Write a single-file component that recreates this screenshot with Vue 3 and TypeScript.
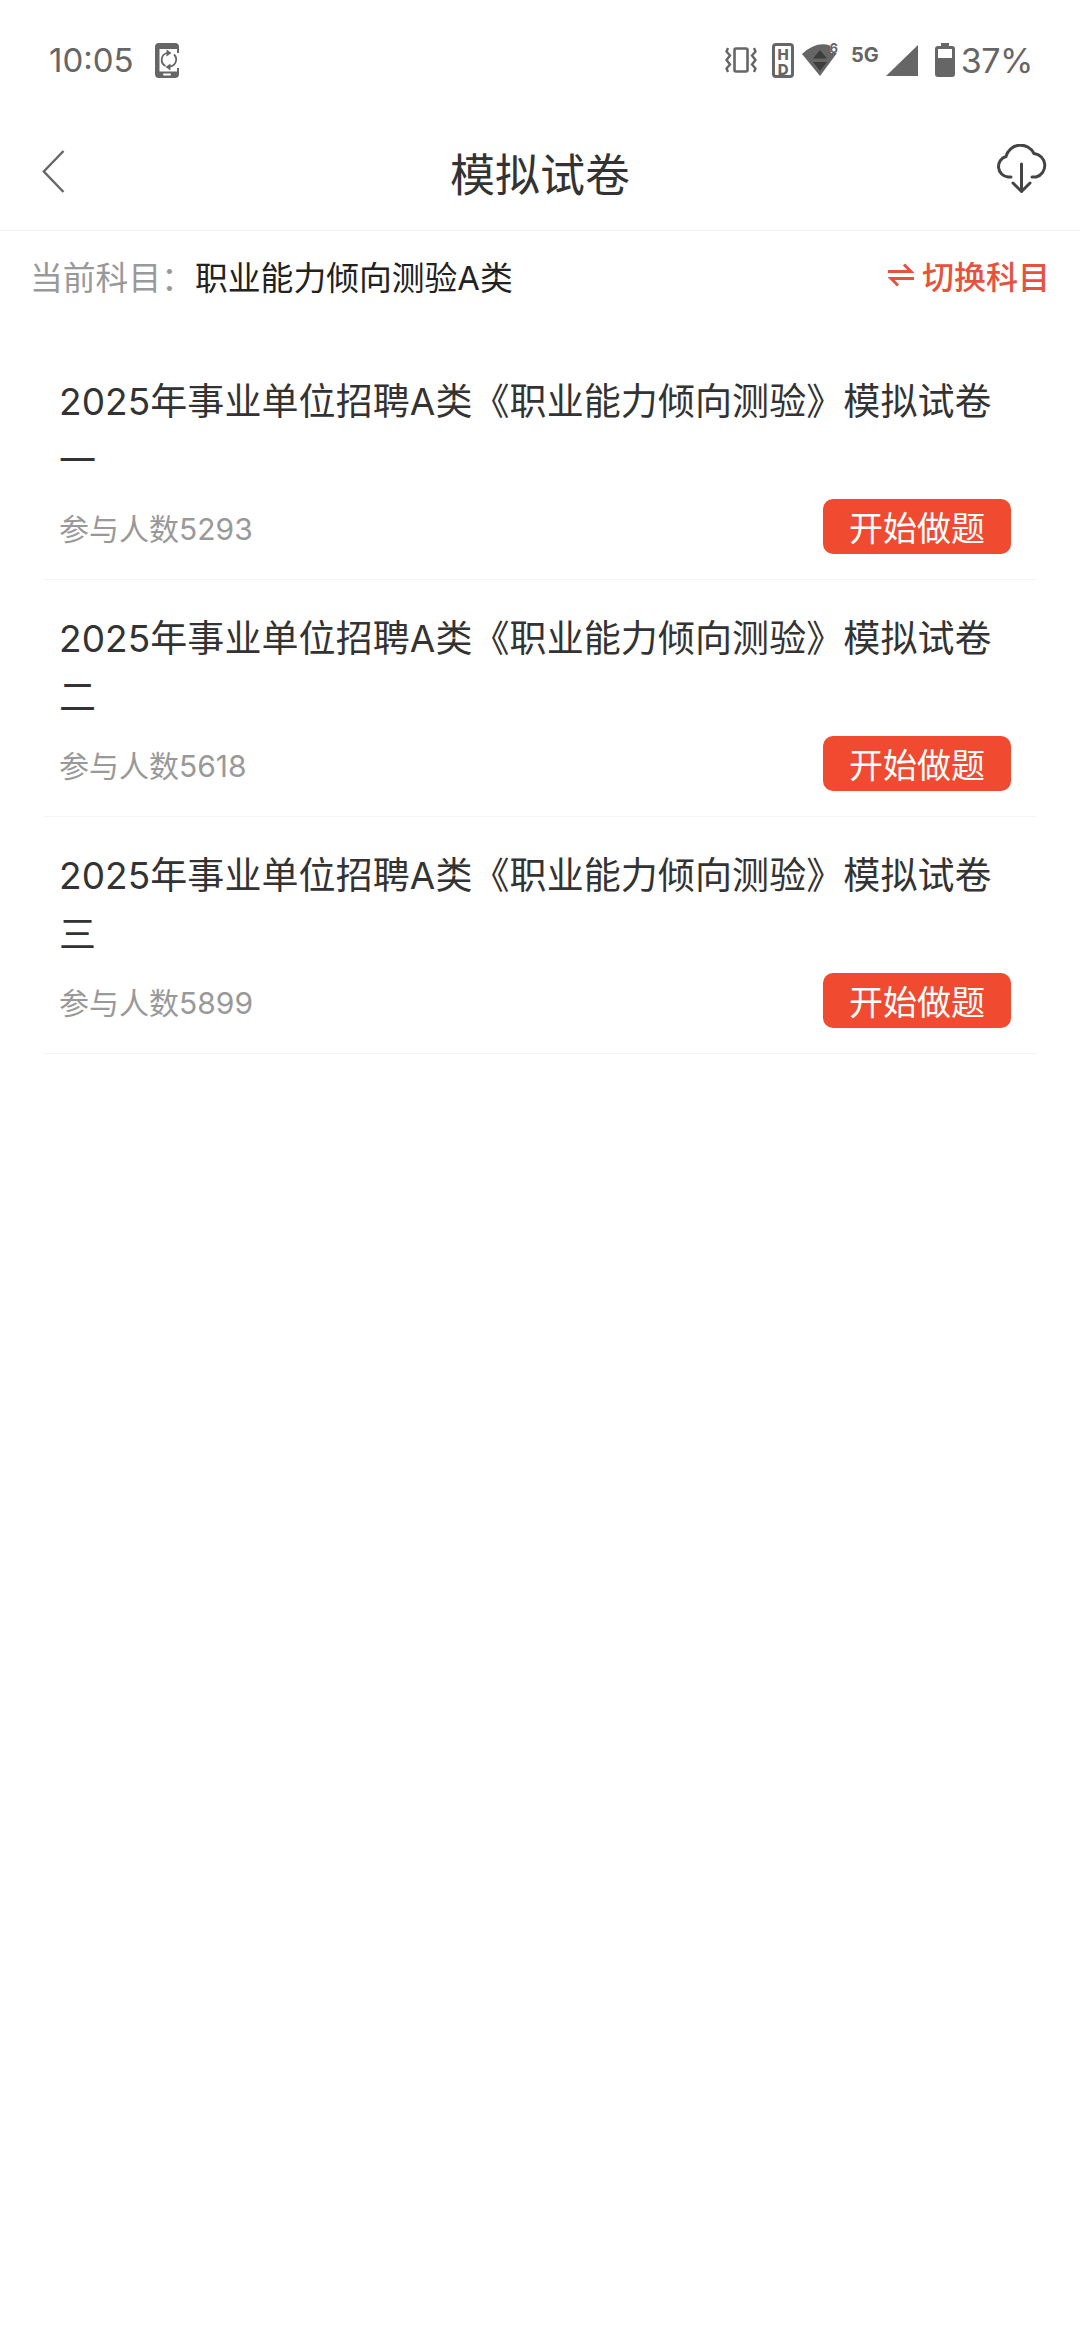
<script setup lang="ts">
interface Paper {
  suffix: string;
  count: number;
}

const papers: Paper[] = [
  { suffix: '一', count: 5293 },
  { suffix: '二', count: 5618 },
  { suffix: '三', count: 5899 },
];

const baseTitle = '2025年事业单位招聘A类《职业能力倾向测验》模拟试卷';
</script>

<template>
  <div class="page">
    <div class="status-bar">
      <div class="status-left">
        <span class="clock">10:05</span>
        <svg class="phone-sync" width="24" height="35" viewBox="0 0 24 35">
          <path fill="#666" d="M4 0h16a4 4 0 0 1 4 4v2H4.500v22.500H24V31a4 4 0 0 1-4 4H4a4 4 0 0 1-4-4V4a4 4 0 0 1 4-4z" />
          <path fill="#666" d="M22 6h2v4h-2zM22 25h2v4h-2z" />
          <rect x="8" y="30.500" width="8" height="2" rx="1" fill="#fff" />
          <path fill="none" stroke="#666" stroke-width="1.800" d="M10.500 23a7 7 0 0 1 1.500-13M19 11.500a7 7 0 0 1-4 12" />
          <path fill="#666" d="M11.500 6.500l5 3.500-5 3.500zM15.500 20.500l-5 3.500 5 3.500z" />
        </svg>
      </div>
      <div class="status-right">
        <svg class="vibrate" width="32" height="26" viewBox="0 0 32 26">
          <rect x="9.500" y="1.500" width="13" height="23" rx="1.500" fill="none" stroke="#666" stroke-width="2.600" />
          <path fill="none" stroke="#666" stroke-width="2.400" d="M3 1L1.500 4.500 5 8.500 1.500 13 5 17.500 1.500 21.500 3 25M29 1L30.500 4.500 27 8.500 30.500 13 27 17.500 30.500 21.500 29 25" />
        </svg>
        <div class="hd-badge">
          <span class="hd-text">HD</span>
        </div>
        <div class="wifi">
          <svg width="36" height="32" viewBox="0 0 36 32">
            <path fill="#666" d="M0 10Q14-3 28 1.500L29 9H35L18 32z" />
            <path fill="#3d3d3d" d="M18 6l7 8.500H11zM18 27l-7-9h14z" />
          </svg>
          <span class="wifi-six">6</span>
        </div>
        <span class="five-g">5G</span>
        <svg class="signal" width="32" height="31" viewBox="0 0 32 31">
          <path fill="#666" d="M32 0v31H0z" />
        </svg>
        <svg class="battery" width="20" height="34" viewBox="0 0 20 34">
          <path fill="#666" d="M6 0h8v3h3a3 3 0 0 1 3 3v25a3 3 0 0 1-3 3H3a3 3 0 0 1-3-3V6a3 3 0 0 1 3-3h3z" />
          <rect x="3" y="6" width="14" height="9" fill="#fff" />
        </svg>
        <span class="percent">37%</span>
      </div>
    </div>

    <header class="nav">
      <svg class="back" width="23" height="43" viewBox="0 0 23 43">
        <path fill="none" stroke="#666" stroke-width="2.400" d="M21.500 1L1.800 21.500 21.500 42" />
      </svg>
      <h1 class="nav-title">模拟试卷</h1>
      <svg class="cloud" width="52" height="50" viewBox="0 0 52 50">
        <path fill="none" stroke="#444" stroke-width="3" stroke-linecap="round" d="M15 33H12A10.500 10.500 0 0 1 10 12.500 15 15 0 0 1 38 9.500 12 12 0 0 1 40 33H36" />
        <path fill="none" stroke="#444" stroke-width="3" stroke-linecap="round" stroke-linejoin="round" d="M25.500 20V47M17 39l8.500 8.500L34 39" />
      </svg>
    </header>

    <div class="subject-row">
      <div class="subject">
        <span class="subject-label">当前科目：</span>
        <span class="subject-name">职业能力倾向测验A类</span>
      </div>
      <div class="switch">
        <svg width="26" height="24" viewBox="0 0 26 24">
          <path fill="none" stroke="#e5533d" stroke-width="3" d="M0 8.500H23L16 1.500M26 15.500H3l7 7" />
        </svg>
        <span>切换科目</span>
      </div>
    </div>

    <ul class="list">
      <li v-for="paper in papers" :key="paper.suffix" class="item">
        <p class="item-title">{{ baseTitle }}{{ paper.suffix }}</p>
        <div class="item-foot">
          <span class="item-count">参与人数{{ paper.count }}</span>
          <button class="start-btn" type="button">开始做题</button>
        </div>
      </li>
    </ul>
  </div>
</template>

<style>
html,
body {
  margin: 0;
  background: #fff;
}
</style>

<style scoped>
.page {
  width: 1080px;
  height: 2334px;
  overflow: hidden;
  background: #fff;
  font-family: Inter, 'Noto Sans CJK SC', sans-serif;
}

.status-bar {
  height: 116px;
  box-sizing: border-box;
  padding: 40px 47px 0 49px;
  display: flex;
  justify-content: space-between;
  align-items: flex-start;
  color: #666;
}

.status-left {
  display: flex;
  align-items: center;
  height: 40px;
}

.clock {
  font-size: 33px;
}

.phone-sync {
  margin-left: 21px;
}

.status-right {
  display: flex;
  align-items: center;
  height: 40px;
}

.hd-badge {
  margin-left: 15px;
  width: 22px;
  height: 35px;
  box-sizing: border-box;
  border: 3.500px solid #666;
  border-radius: 4px;
  overflow: hidden;
  display: flex;
  align-items: center;
  justify-content: center;
}

.hd-text {
  writing-mode: vertical-rl;
  text-orientation: upright;
  font-size: 15px;
  font-weight: 800;
  line-height: 15px;
  letter-spacing: -4px;
}

.wifi {
  position: relative;
  margin-left: 8px;
  width: 36px;
  height: 32px;
}

.wifi svg {
  display: block;
}

.wifi-six {
  position: absolute;
  top: -2px;
  right: 0;
  font-size: 13px;
  line-height: 13px;
  font-weight: 700;
}

.five-g {
  margin-left: 13px;
  margin-top: -11px;
  font-size: 20px;
  font-weight: 700;
}

.signal {
  margin-left: 7px;
}

.battery {
  margin-left: 17px;
}

.percent {
  margin-left: 6px;
  font-size: 34px;
  letter-spacing: -0.500px;
}

.nav {
  height: 115px;
  box-sizing: border-box;
  padding: 0 32px;
  display: grid;
  grid-template-columns: 1fr auto 1fr;
  align-items: center;
  border-bottom: 1px solid #f2f2f2;
}

.nav-title {
  margin: -2px 0 0;
  font-size: 45px;
  font-weight: 400;
  color: #333;
}

.back {
  margin: -3px 0 0 10px;
}

.cloud {
  justify-self: end;
  margin-top: -8px;
}

.subject-row {
  height: 88px;
  box-sizing: border-box;
  padding: 0 30px;
  display: flex;
  align-items: center;
  justify-content: space-between;
}

.subject {
  display: flex;
  align-items: center;
  font-size: 32.800px;
}

.subject-label {
  color: #999;
  width: 165px;
}

.subject-name {
  color: #222;
}

.switch {
  display: flex;
  align-items: center;
  gap: 8px;
  font-size: 32px;
  font-weight: 500;
  color: #e5533d;
}

.list {
  list-style: none;
  margin: 24px 44px 0;
  padding: 0;
}

.item {
  height: 237px;
  box-sizing: border-box;
  padding: 30px 15px 0;
  border-bottom: 1px solid #f4f4f4;
}

.item-title {
  margin: 0;
  font-size: 37px;
  line-height: 58.500px;
  letter-spacing: 0.080px;
  color: #333;
}

.item-foot {
  display: flex;
  justify-content: space-between;
  align-items: center;
  margin-top: 9px;
}

.item-count {
  font-size: 30px;
  color: #999;
}

.start-btn {
  width: 188px;
  height: 55px;
  margin-right: 10px;
  padding: 0;
  border: none;
  border-radius: 10px;
  background: #f04a30;
  color: #fff;
  font-family: inherit;
  font-size: 34px;
}
</style>
